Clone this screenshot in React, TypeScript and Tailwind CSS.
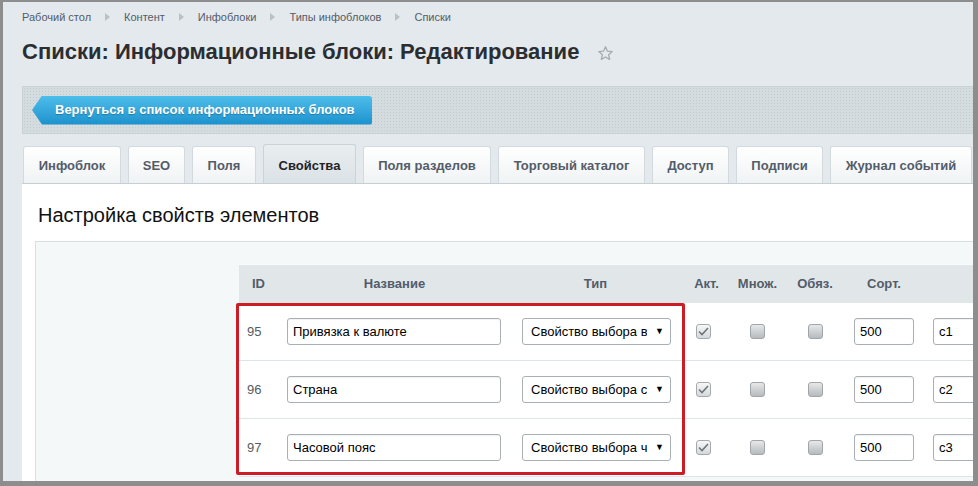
import React from "react";

const FONT = { fontFamily: '"Liberation Sans", Arial, sans-serif' };

const CRUMBS = ["Рабочий стол", "Контент", "Инфоблоки", "Типы инфоблоков", "Списки"];

// tab widths are fixed so the strip lines up with the panel edge
const TABS: { label: string; w: string; active?: boolean }[] = [
  { label: "Инфоблок", w: "w-[98px]" },
  { label: "SEO", w: "w-[57px]" },
  { label: "Поля", w: "w-[64px]" },
  { label: "Свойства", w: "w-[93px]", active: true },
  { label: "Поля разделов", w: "w-[128px]" },
  { label: "Торговый каталог", w: "w-[147px]" },
  { label: "Доступ", w: "w-[77px]" },
  { label: "Подписи", w: "w-[87px]" },
  { label: "Журнал событий", w: "w-[142px]" },
];

const ROWS = [
  { id: 95, name: "Привязка к валюте", type: "Свойство выбора валюты", code: "c1" },
  { id: 96, name: "Страна", type: "Свойство выбора страны", code: "c2" },
  { id: 97, name: "Часовой пояс", type: "Свойство выбора часового пояса", code: "c3" },
];

const COLS = "grid grid-cols-[43px_225px_177px_45px_57px_58px_80px_200px]";

function CrumbArrow() {
  return (
    <svg width="5" height="8" viewBox="0 0 5 8" className="mx-[14px]">
      <path d="M0 0 L5 4 L0 8 Z" fill="#b9c1c6" />
    </svg>
  );
}

function Star() {
  return (
    <svg width="17" height="17" viewBox="0 0 24 24" className="ml-[18px] mt-[2px]">
      <path
        d="M12 2.5 L14.8 8.7 L21.5 9.3 L16.4 13.8 L17.9 20.4 L12 16.9 L6.1 20.4 L7.6 13.8 L2.5 9.3 L9.2 8.7 Z"
        fill="none"
        stroke="#a2abb1"
        strokeWidth="1.8"
        strokeLinejoin="round"
      />
    </svg>
  );
}

function Checkbox({ checked }: { checked?: boolean }) {
  return checked ? (
    <div className="flex h-[15px] w-[15px] items-center justify-center rounded-[3px] border border-[#a4a9ad] bg-linear-to-b from-[#f6f7f7] to-[#d6d9db]">
      <svg width="11" height="9" viewBox="0 0 11 9">
        <path d="M1 4.5 L4 7.5 L10 1" fill="none" stroke="#6f757a" strokeWidth="1.6" />
      </svg>
    </div>
  ) : (
    <div className="h-[15px] w-[15px] rounded-[3px] border border-[#a0a5a9] bg-linear-to-b from-[#e6e8e9] to-[#b7bbbe]" />
  );
}

function TextBox({ value, w }: { value: string; w: string }) {
  return (
    <div
      className={`flex h-[27px] ${w} items-center overflow-hidden whitespace-nowrap rounded-[3px] border border-[#a9afb3] bg-white pl-[5px] text-[13px] text-black shadow-[inset_0_1px_1px_rgba(0,0,0,0.06)]`}
    >
      {value}
    </div>
  );
}

function TypeSelect({ value }: { value: string }) {
  return (
    <div className="flex h-[27px] w-[149px] items-center rounded-[3px] border border-[#a9afb3] bg-white pl-[8px] pr-[6px] text-[13px] text-black">
      <span className="w-[116px] overflow-hidden whitespace-nowrap">{value}</span>
      <span className="ml-auto text-[9px] leading-none text-black">▼</span>
    </div>
  );
}

export default function App() {
  return (
    <div
      style={FONT}
      className="h-[486px] w-[978px] overflow-hidden bg-[#8d8d8d] pb-[5px] pl-[3px] pr-[5px] pt-[2px]"
    >
      <div className="flex h-full flex-col overflow-hidden bg-[#e3e9ec] pl-[19px]">
        {/* breadcrumbs */}
        <div className="mt-[8px] flex h-[14px] items-center text-[11px] text-[#535c69]">
          {CRUMBS.map((c, i) => (
            <React.Fragment key={c}>
              {i > 0 && <CrumbArrow />}
              <span>{c}</span>
            </React.Fragment>
          ))}
        </div>

        {/* page title */}
        <div className="mt-[15px] flex h-[26px] items-center">
          <h1 className="text-[22px] font-bold leading-[26px] text-[#2a2e32]">
            Списки: Информационные блоки: Редактирование
          </h1>
          <Star />
        </div>

        {/* toolbar */}
        <div className="mt-[21px] flex h-[48px] items-center border border-r-0 border-[#c9d1d5] bg-[#d5dcdf] bg-[radial-gradient(#c3cbcf_0.8px,transparent_0.8px)] bg-[length:3px_3px] pl-[9px]">
          <div className="flex h-[29px] w-[340px] items-center rounded-r-[3px] bg-linear-to-b from-[#4cbeea] to-[#1b91cd] pl-[23px] text-[13px] font-bold text-white shadow-[0_1px_1px_rgba(0,0,0,0.2)] [clip-path:polygon(10px_0,100%_0,100%_100%,10px_100%,0_50%)] [text-shadow:0_1px_1px_rgba(0,0,0,0.25)]">
            Вернуться в список информационных блоков
          </div>
        </div>

        {/* tabs */}
        <div className="mt-[10px] flex h-[39px] items-end gap-[7px] pl-[1px]">
          {TABS.map((t) =>
            t.active ? (
              <div
                key={t.label}
                className={`flex h-[39px] ${t.w} shrink-0 justify-center rounded-t-[3px] border border-b-0 border-[#cbd3d7] bg-linear-to-b from-[#e9eef0] to-[#dbe2e5] pt-[11px] text-[13px] font-bold text-[#1f2226]`}
              >
                {t.label}
              </div>
            ) : (
              <div
                key={t.label}
                className={`flex h-[37px] ${t.w} shrink-0 items-center justify-center rounded-t-[3px] border border-b-0 border-[#d3dadd] bg-linear-to-b from-[#ffffff] to-[#f0f3f4] pt-[2px] text-[13px] font-bold text-[#535c69]`}
              >
                {t.label}
              </div>
            ),
          )}
        </div>

        {/* tab body */}
        <div className="flex flex-1 flex-col border-t border-[#c6cfd3] bg-white pl-[13px]">
          <div className="ml-[3px] mt-[19px] h-[24px] text-[20px] leading-[24px] text-[#111]">
            Настройка свойств элементов
          </div>

          <div className="mt-[14px] flex-1 border-l border-t border-[#d8dfe2] bg-[#f4f8f9] pl-[203px] pt-[22px]">
            <div className="relative border-t border-[#f8fbfb]">
              <div
                className={`${COLS} h-[38px] items-center bg-[#e1e7e9] text-[13px] font-bold text-[#535c69]`}
              >
                <div className="pl-[13px]">ID</div>
                <div className="text-center">Название</div>
                <div className="text-center">Тип</div>
                <div className="text-center">Акт.</div>
                <div className="text-center">Множ.</div>
                <div className="text-center">Обяз.</div>
                <div className="text-center">Сорт.</div>
                <div />
              </div>

              {ROWS.map((r) => (
                <div
                  key={r.id}
                  className={`${COLS} h-[58px] items-center border-b border-[#dfe5e7] bg-white text-[13px]`}
                >
                  <div className="pl-[8px] text-[#555b60]">{r.id}</div>
                  <div className="pl-[5px]">
                    <TextBox value={r.name} w="w-[214px]" />
                  </div>
                  <div className="pl-[15px]">
                    <TypeSelect value={r.type} />
                  </div>
                  <div className="pl-[12px]">
                    <Checkbox checked />
                  </div>
                  <div className="pl-[21px]">
                    <Checkbox />
                  </div>
                  <div className="pl-[22px]">
                    <Checkbox />
                  </div>
                  <div className="pl-[10px]">
                    <TextBox value="500" w="w-[60px]" />
                  </div>
                  <div className="pl-[9px]">
                    <TextBox value={r.code} w="w-[120px]" />
                  </div>
                </div>
              ))}

              {/* highlight frame over the first columns */}
              <div className="pointer-events-none absolute left-[-3px] top-[38px] h-[172px] w-[449px] rounded-[2px] border-[3px] border-[#cc1d27]" />
            </div>
          </div>
        </div>
      </div>
    </div>
  );
}
